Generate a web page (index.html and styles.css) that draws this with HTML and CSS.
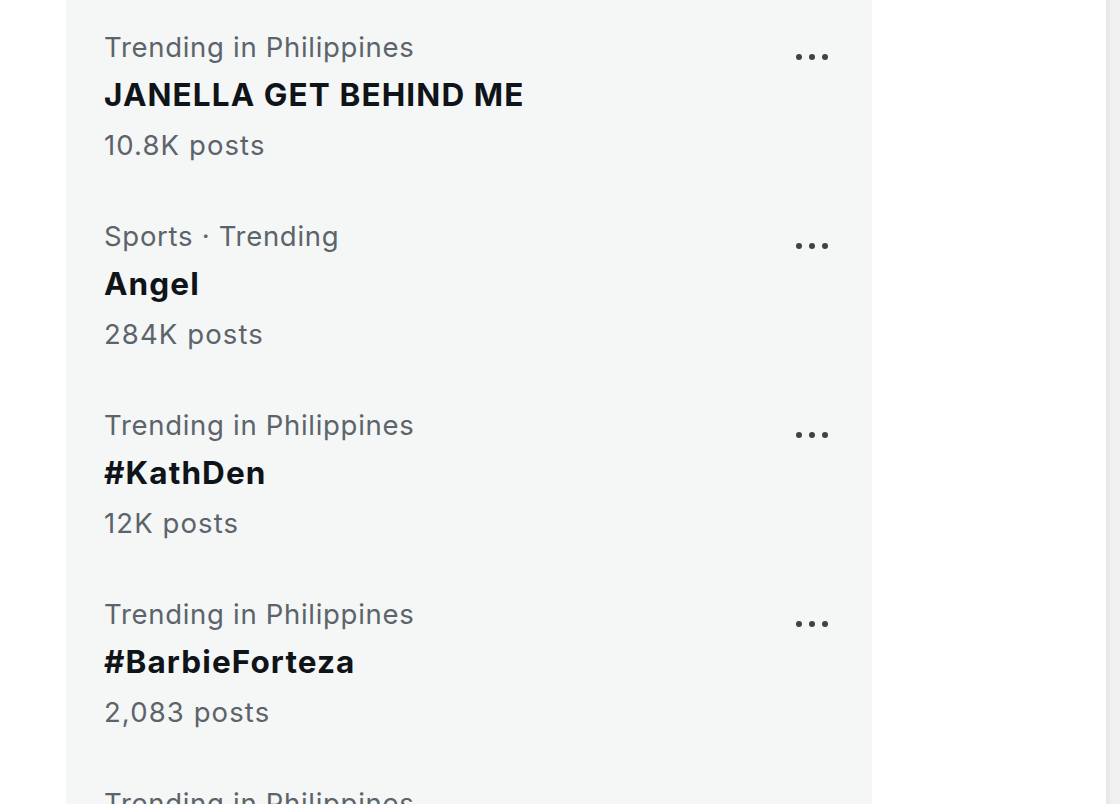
FILE: index.html
```html
<!DOCTYPE html>
<html>
<head>
<meta charset="utf-8">
<link rel="stylesheet" href="styles.css">
</head>
<body>
<div class="page">
  <div class="gutter"></div>
  <section class="trends">
    <div class="trend">
      <div class="info">
        <div class="cat">Trending in Philippines</div>
        <div class="title">JANELLA GET BEHIND ME</div>
        <div class="count">10.8K posts</div>
      </div>
      <div class="more"><span></span><span></span><span></span></div>
    </div>
    <div class="trend">
      <div class="info">
        <div class="cat">Sports · Trending</div>
        <div class="title">Angel</div>
        <div class="count">284K posts</div>
      </div>
      <div class="more"><span></span><span></span><span></span></div>
    </div>
    <div class="trend">
      <div class="info">
        <div class="cat">Trending in Philippines</div>
        <div class="title">#KathDen</div>
        <div class="count">12K posts</div>
      </div>
      <div class="more"><span></span><span></span><span></span></div>
    </div>
    <div class="trend">
      <div class="info">
        <div class="cat">Trending in Philippines</div>
        <div class="title">#BarbieForteza</div>
        <div class="count">2,083 posts</div>
      </div>
      <div class="more"><span></span><span></span><span></span></div>
    </div>
    <div class="trend trend-partial">
      <div class="info">
        <div class="cat">Trending in Philippines</div>
      </div>
    </div>
  </section>
  <div class="blank"></div>
  <div class="scrollbar"></div>
</div>
</body>
</html>
```
FILE: styles.css
```css
html, body {
  margin: 0;
  padding: 0;
  background: #ffffff;
  height: 100%;
  overflow: hidden;
}
.page {
  display: flex;
  height: 804px;
  width: 1120px;
  font-family: Inter, "Noto Sans", sans-serif;
}
.gutter {
  width: 66px;
  flex: none;
}
.trends {
  width: 806px;
  flex: none;
  background: #f5f6f6;
  overflow: hidden;
}
.trend {
  display: flex;
  justify-content: space-between;
  align-items: flex-start;
  padding: 23px 44px 20px 38px;
  height: 146px;
}
.trend-partial {
  height: auto;
}
.cat {
  font-size: 27.5px;
  line-height: 48px;
  letter-spacing: 0.7px;
  color: #5c646b;
}
.title {
  font-size: 31.5px;
  line-height: 46px;
  margin-top: 1px;
  letter-spacing: 1.1px;
  font-weight: 700;
  color: #0f1419;
}
.count {
  font-size: 27.5px;
  line-height: 48px;
  margin-top: 3px;
  letter-spacing: 1.1px;
  color: #5c646b;
}
.more {
  display: flex;
  gap: 7px;
  margin-top: 31px;
}
.more span {
  width: 6px;
  height: 6px;
  border-radius: 50%;
  background: #3e4347;
}
.blank {
  flex: 1;
}
.scrollbar {
  width: 10px;
  flex: none;
  background: #f0f0f0;
  border-left: 4px solid #e9e9e9;
}
```
